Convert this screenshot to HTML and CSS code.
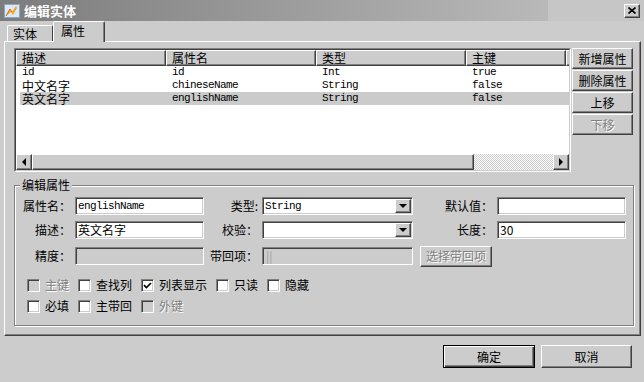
FILE: index.html
```html
<!DOCTYPE html>
<html lang="zh-CN">
<head>
  <meta charset="UTF-8">
  <title>编辑实体</title>
  <link rel="stylesheet" href="styles.css">
</head>
<body>
<div class="window">

  <!-- Title bar -->
  <div class="titlebar">
    <svg class="app-icon" width="16" height="16" viewBox="0 0 16 16">
      <rect x="0.5" y="1.5" width="15" height="13" fill="#dce8f6" stroke="#8aa6c8"/>
      <path d="M2 13 L6 6 L8 9 L12 3 L13 5 L9 12 L7 9 Z" fill="#f0a428"/>
      <path d="M2 13 L6 6 L8 9" fill="none" stroke="#c87810" stroke-width="1"/>
    </svg>
    <span class="title">编辑实体</span>
    <div class="close-btn">
      <svg width="8" height="7" viewBox="0 0 8 7"><path d="M0.5 0.5 L7.5 6.5 M7.5 0.5 L0.5 6.5" stroke="#000" stroke-width="1.6"/></svg>
    </div>
  </div>

  <!-- Tabs -->
  <div class="tabs">
    <div class="tab">实体</div>
    <div class="tab active">属性</div>
  </div>

  <div class="panel">
    <div class="top">
      <div class="list">
        <div class="list-in">
          <div class="grid">
            <div class="grid-head">
              <div class="th">描述</div>
              <div class="th">属性名</div>
              <div class="th">类型</div>
              <div class="th th-short">主键</div>
              <div class="th th-fill"></div>
            </div>
            <div class="row">
              <div class="td mono">id</div>
              <div class="td mono">id</div>
              <div class="td mono">Int</div>
              <div class="td td-last mono">true</div>
            </div>
            <div class="row">
              <div class="td">中文名字</div>
              <div class="td mono">chineseName</div>
              <div class="td mono">String</div>
              <div class="td td-last mono">false</div>
            </div>
            <div class="row sel">
              <div class="td">英文名字</div>
              <div class="td mono">englishName</div>
              <div class="td mono">String</div>
              <div class="td td-last mono">false</div>
            </div>
          </div>
          <div class="hscroll">
            <div class="raised sb-arrow"><span class="tri-left"></span></div>
            <div class="raised sb-thumb"></div>
            <div class="sb-track"></div>
            <div class="raised sb-arrow"><span class="tri-right"></span></div>
          </div>
        </div>
      </div>
      <div class="side-btns">
        <div class="raised btn">新增属性</div>
        <div class="raised btn">删除属性</div>
        <div class="raised btn">上移</div>
        <div class="raised btn disabled">下移</div>
      </div>
    </div>

    <fieldset class="group">
      <legend>编辑属性</legend>
      <div class="form">
        <div class="lbl">属性名：</div>
        <div class="field mono">englishName</div>
        <div class="lbl">类型:</div>
        <div class="field select"><span class="val mono">String</span><span class="raised drop"><span class="tri-down"></span></span></div>
        <div class="lbl">默认值：</div>
        <div class="field"></div>

        <div class="lbl">描述：</div>
        <div class="field">英文名字</div>
        <div class="lbl">校验：</div>
        <div class="field select"><span class="val"></span><span class="raised drop"><span class="tri-down"></span></span></div>
        <div class="lbl">长度：</div>
        <div class="field">30</div>

        <div class="lbl">精度：</div>
        <div class="field disabled"></div>
        <div class="lbl">带回项：</div>
        <div class="field disabled"><span class="bars">||</span></div>
        <div class="raised btn pick disabled">选择带回项</div>
      </div>

      <div class="checks first">
        <div class="chk off"><span class="box"></span>主键</div>
        <div class="chk"><span class="box"></span>查找列</div>
        <div class="chk"><span class="box"><svg width="9" height="9" viewBox="0 0 9 9"><path d="M1 4.2 L3.4 6.6 L8 2" fill="none" stroke="#000" stroke-width="1.7"/></svg></span>列表显示</div>
        <div class="chk"><span class="box"></span>只读</div>
        <div class="chk"><span class="box"></span>隐藏</div>
      </div>
      <div class="checks">
        <div class="chk"><span class="box"></span>必填</div>
        <div class="chk"><span class="box"></span>主带回</div>
        <div class="chk off"><span class="box"></span>外键</div>
      </div>
    </fieldset>
  </div>

  <div class="footer">
    <div class="raised btn big default">确定</div>
    <div class="raised btn big">取消</div>
  </div>
</div>
</body>
</html>
```

FILE: styles.css
```css
body {
  margin: 0;
  font-family: "Noto Sans CJK SC", "Liberation Sans", sans-serif;
  font-size: 12px;
  color: #000;
}

.window {
  width: 644px;
  height: 382px;
  background: #cccccc;
  overflow: hidden;
}

/* Title bar */
.titlebar {
  height: 21px;
  display: flex;
  align-items: center;
  background: linear-gradient(to right, #7c7c7c 0, #b9b9b9 548px, #c6c6c6 548px);
}

.app-icon {
  margin-left: 4px;
}

.title {
  margin-left: 4px;
  color: #fff;
  font-weight: bold;
  font-size: 13px;
  line-height: 21px;
}

.close-btn {
  margin-left: auto;
  margin-right: 4px;
  width: 16px;
  height: 14px;
  box-sizing: border-box;
  background: #cccccc;
  border: 1px solid;
  border-color: #fff #404040 #404040 #fff;
  box-shadow: inset -1px -1px #808080;
  display: flex;
  align-items: center;
  justify-content: center;
}

/* Tabs */
.tabs {
  height: 20px;
  display: flex;
  align-items: flex-end;
  padding-left: 7px;
}

.tab {
  width: 46px;
  height: 16px;
  box-sizing: border-box;
  border: 1px solid;
  border-bottom: none;
  border-color: #fff #404040 transparent #fff;
  border-radius: 2px 2px 0 0;
  padding-left: 5px;
  line-height: 15px;
}

.tab.active {
  position: relative;
  z-index: 1;
  width: 52px;
  height: 21px;
  margin-bottom: -1px;
  padding-left: 7px;
  line-height: 18px;
  background: #cccccc;
  box-shadow: inset -1px 0 #808080;
}

/* Tab page */
.panel {
  margin-left: 4px;
  width: 637px;
  height: 295px;
  box-sizing: border-box;
  border: 1px solid;
  border-color: #fff #404040 #404040 #fff;
  box-shadow: inset -1px -1px #808080;
  padding: 6px 0 0 9px;
}

.top {
  display: flex;
  gap: 1px;
}

.raised {
  background: #cccccc;
  border: 1px solid;
  border-color: #fff #404040 #404040 #fff;
  box-shadow: inset -1px -1px #808080;
  box-sizing: border-box;
}

/* List view */
.list {
  width: 557px;
  height: 124px;
  box-sizing: border-box;
  border: 1px solid;
  border-color: #808080 #fff #fff #808080;
}

.list-in {
  height: 100%;
  box-sizing: border-box;
  border: 1px solid;
  border-color: #404040 #cccccc #cccccc #404040;
  background: #fff;
  display: flex;
  flex-direction: column;
}

.grid {
  flex: 1;
  overflow: hidden;
}

.grid-head {
  display: flex;
  height: 16px;
}

.th {
  flex: none;
  width: 150px;
  box-sizing: border-box;
  background: #cccccc;
  border: 1px solid;
  border-color: #fff #404040 #404040 #fff;
  box-shadow: inset -1px -1px #808080;
  padding-left: 5px;
  line-height: 13px;
}

.th-short {
  width: 100px;
}

.th-fill {
  flex: 1;
  width: auto;
}

.row {
  display: flex;
  height: 13px;
  line-height: 13px;
  margin-left: 4px;
}

.row.sel {
  background: #cbcbcb;
}

.td {
  flex: none;
  width: 150px;
  box-sizing: border-box;
  padding-left: 2px;
  white-space: nowrap;
}

.td-last {
  flex: 1;
  width: auto;
}

.mono {
  font-family: "Liberation Mono", monospace;
  font-size: 11px;
  letter-spacing: -0.6px;
}

/* Horizontal scrollbar */
.hscroll {
  height: 16px;
  display: flex;
}

.sb-arrow {
  width: 16px;
  height: 16px;
  display: flex;
  align-items: center;
  justify-content: center;
}

.sb-thumb {
  width: 442px;
  height: 16px;
}

.sb-track {
  flex: 1;
  background: conic-gradient(#fff 25%, #cccccc 0 50%, #fff 0 75%, #cccccc 0) 0 0 / 2px 2px;
}

.tri-left {
  width: 0;
  height: 0;
  border-top: 4px solid transparent;
  border-bottom: 4px solid transparent;
  border-right: 4px solid #000;
}

.tri-right {
  width: 0;
  height: 0;
  border-top: 4px solid transparent;
  border-bottom: 4px solid transparent;
  border-left: 4px solid #000;
}

.tri-down {
  width: 0;
  height: 0;
  border-left: 4px solid transparent;
  border-right: 4px solid transparent;
  border-top: 4px solid #000;
}

/* Buttons */
.side-btns {
  width: 61px;
  display: flex;
  flex-direction: column;
  gap: 1px;
}

.btn {
  height: 21px;
  display: flex;
  align-items: center;
  justify-content: center;
  line-height: 14px;
}

.btn.disabled {
  color: #808080;
  text-shadow: 1px 1px #fff;
}

/* Group box */
.group {
  margin: 6px 0 0 0;
  padding: 5px 0 0 0;
  width: 620px;
  height: 148px;
  box-sizing: border-box;
  min-width: 0;
  border: 1px solid #808080;
  box-shadow: 1px 1px #fff, inset 1px 1px #fff;
}

.group legend {
  margin-left: 5px;
  padding: 0 2px;
  line-height: 14px;
  background: #cccccc;
}

.form {
  display: grid;
  grid-template-columns: 60px 129px 58px 151px 84px 129px;
  grid-template-rows: 18px 18px 22px;
  row-gap: 6px;
  align-items: center;
}

.lbl {
  text-align: right;
  padding-right: 4px;
  line-height: 16px;
  white-space: nowrap;
}

.field {
  height: 18px;
  box-sizing: border-box;
  border: 1px solid;
  border-color: #808080 #fff #fff #808080;
  box-shadow: inset 1px 1px #404040, inset -1px -1px #cccccc;
  background: #fff;
  padding-left: 2px;
  line-height: 16px;
  white-space: nowrap;
  overflow: hidden;
}

.field.disabled {
  background: #cccccc;
}

.bars {
  color: #a0a0a0;
  padding-left: 1px;
}

.select {
  display: flex;
  padding: 1px;
}

.select .val {
  flex: 1;
  padding-left: 1px;
  line-height: 14px;
}

.drop {
  width: 16px;
  height: 14px;
  display: flex;
  align-items: center;
  justify-content: center;
}

.pick {
  grid-column: 5 / 7;
  justify-self: start;
  margin-left: 7px;
  width: 72px;
}

/* Checkboxes */
.checks {
  display: flex;
  height: 14px;
  margin: 7px 0 0 12px;
}

.checks.first {
  margin-top: 11px;
}

.chk {
  display: flex;
  align-items: center;
  gap: 5px;
  margin-right: 9px;
  line-height: 14px;
}

.box {
  width: 13px;
  height: 13px;
  box-sizing: border-box;
  border: 1px solid;
  border-color: #808080 #fff #fff #808080;
  box-shadow: inset 1px 1px #404040, inset -1px -1px #cccccc;
  background: #fff;
  display: flex;
  align-items: center;
  justify-content: center;
}

.chk.off {
  color: #808080;
  text-shadow: 1px 1px #fff;
}

.chk.off .box {
  background: #cccccc;
}

/* Dialog buttons */
.footer {
  display: flex;
  justify-content: flex-end;
  gap: 6px;
  padding: 9px 12px 0 0;
}

.btn.big {
  width: 91px;
  height: 23px;
}

.btn.default {
  width: 92px;
  border: 1px solid #000;
  box-shadow: inset 1px 1px #fff, inset -1px -1px #404040, inset -2px -2px #808080;
}
```
